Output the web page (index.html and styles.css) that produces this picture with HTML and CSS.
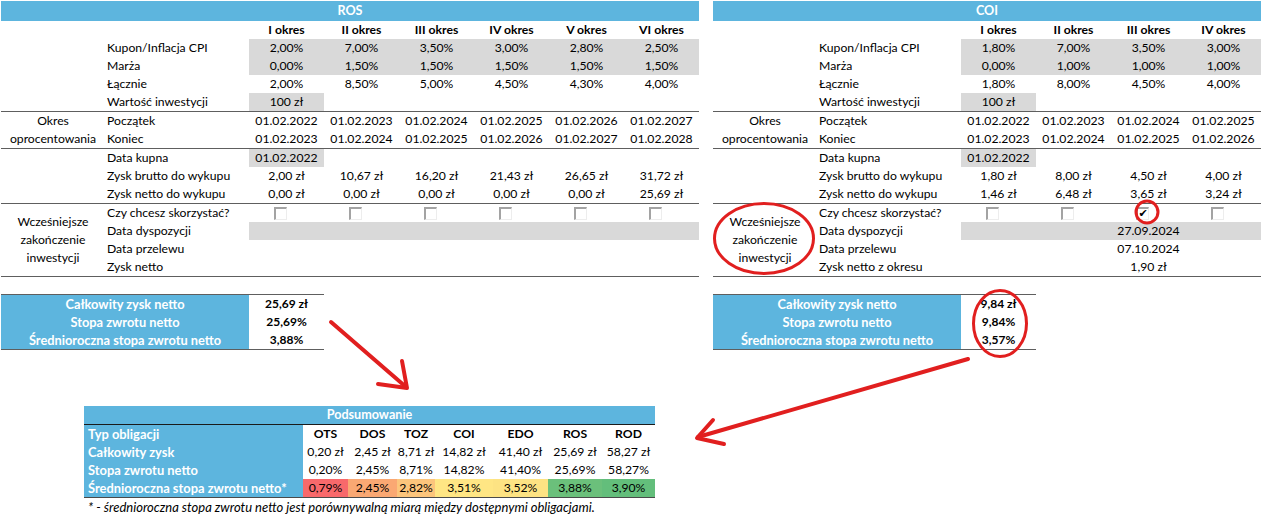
FILE: index.html
```html
<!DOCTYPE html>
<html lang="pl">
<head>
<meta charset="utf-8">
<title>Obligacje</title>
<link rel="stylesheet" href="styles.css">
</head>
<body>
<div class="sheet">
  <div class="top">
    <section class="panel ros">
      <div class="bar">ROS</div>
      <div class="grp">
        <div class="side s5"></div>
        <div class="lbl"></div>
        <div class="c b">I okres</div><div class="c b">II okres</div><div class="c b">III okres</div><div class="c b">IV okres</div><div class="c b">V okres</div><div class="c b">VI okres</div>
        <div class="lbl">Kupon/Inflacja CPI</div>
        <div class="c g">2,00%</div><div class="c g">7,00%</div><div class="c g">3,50%</div><div class="c g">3,00%</div><div class="c g">2,80%</div><div class="c g">2,50%</div>
        <div class="lbl">Marża</div>
        <div class="c g">0,00%</div><div class="c g">1,50%</div><div class="c g">1,50%</div><div class="c g">1,50%</div><div class="c g">1,50%</div><div class="c g">1,50%</div>
        <div class="lbl">Łącznie</div>
        <div class="c">2,00%</div><div class="c">8,50%</div><div class="c">5,00%</div><div class="c">4,50%</div><div class="c">4,30%</div><div class="c">4,00%</div>
        <div class="lbl">Wartość inwestycji</div>
        <div class="c g">100 zł</div>
      </div>
      <div class="grp">
        <div class="side s2">Okres<br>oprocentowania</div>
        <div class="lbl">Początek</div>
        <div class="c">01.02.2022</div><div class="c">01.02.2023</div><div class="c">01.02.2024</div><div class="c">01.02.2025</div><div class="c">01.02.2026</div><div class="c">01.02.2027</div>
        <div class="lbl">Koniec</div>
        <div class="c">01.02.2023</div><div class="c">01.02.2024</div><div class="c">01.02.2025</div><div class="c">01.02.2026</div><div class="c">01.02.2027</div><div class="c">01.02.2028</div>
      </div>
      <div class="grp">
        <div class="side s3"></div>
        <div class="lbl">Data kupna</div>
        <div class="c g">01.02.2022</div>
        <div class="lbl">Zysk brutto do wykupu</div>
        <div class="c">2,00 zł</div><div class="c">10,67 zł</div><div class="c">16,20 zł</div><div class="c">21,43 zł</div><div class="c">26,65 zł</div><div class="c">31,72 zł</div>
        <div class="lbl">Zysk netto do wykupu</div>
        <div class="c">0,00 zł</div><div class="c">0,00 zł</div><div class="c">0,00 zł</div><div class="c">0,00 zł</div><div class="c">0,00 zł</div><div class="c">25,69 zł</div>
      </div>
      <div class="grp">
        <div class="side s4">Wcześniejsze<br>zakończenie<br>inwestycji</div>
        <div class="lbl">Czy chcesz skorzystać?</div>
        <div class="cbx"><span class="box"></span></div><div class="cbx"><span class="box"></span></div><div class="cbx"><span class="box"></span></div><div class="cbx"><span class="box"></span></div><div class="cbx"><span class="box"></span></div><div class="cbx"><span class="box"></span></div>
        <div class="lbl">Data dyspozycji</div>
        <div class="g"></div><div class="g"></div><div class="g"></div><div class="g"></div><div class="g"></div><div class="g"></div>
        <div class="lbl">Data przelewu</div>
        <div class="lbl">Zysk netto</div>
      </div>
      <div class="summ">
        <div class="k">Całkowity zysk netto</div><div class="v">25,69 zł</div>
        <div class="k">Stopa zwrotu netto</div><div class="v">25,69%</div>
        <div class="k">Średnioroczna stopa zwrotu netto</div><div class="v">3,88%</div>
      </div>
    </section>

    <section class="panel coi">
      <div class="bar">COI</div>
      <div class="grp">
        <div class="side s5"></div>
        <div class="lbl"></div>
        <div class="c b">I okres</div><div class="c b">II okres</div><div class="c b">III okres</div><div class="c b">IV okres</div>
        <div class="lbl">Kupon/Inflacja CPI</div>
        <div class="c g">1,80%</div><div class="c g">7,00%</div><div class="c g">3,50%</div><div class="c g">3,00%</div>
        <div class="lbl">Marża</div>
        <div class="c g">0,00%</div><div class="c g">1,00%</div><div class="c g">1,00%</div><div class="c g">1,00%</div>
        <div class="lbl">Łącznie</div>
        <div class="c">1,80%</div><div class="c">8,00%</div><div class="c">4,50%</div><div class="c">4,00%</div>
        <div class="lbl">Wartość inwestycji</div>
        <div class="c g">100 zł</div>
      </div>
      <div class="grp">
        <div class="side s2">Okres<br>oprocentowania</div>
        <div class="lbl">Początek</div>
        <div class="c">01.02.2022</div><div class="c">01.02.2023</div><div class="c">01.02.2024</div><div class="c">01.02.2025</div>
        <div class="lbl">Koniec</div>
        <div class="c">01.02.2023</div><div class="c">01.02.2024</div><div class="c">01.02.2025</div><div class="c">01.02.2026</div>
      </div>
      <div class="grp">
        <div class="side s3"></div>
        <div class="lbl">Data kupna</div>
        <div class="c g">01.02.2022</div>
        <div class="lbl">Zysk brutto do wykupu</div>
        <div class="c">1,80 zł</div><div class="c">8,00 zł</div><div class="c">4,50 zł</div><div class="c">4,00 zł</div>
        <div class="lbl">Zysk netto do wykupu</div>
        <div class="c">1,46 zł</div><div class="c">6,48 zł</div><div class="c">3,65 zł</div><div class="c">3,24 zł</div>
      </div>
      <div class="grp">
        <div class="side s4">Wcześniejsze<br>zakończenie<br>inwestycji</div>
        <div class="lbl">Czy chcesz skorzystać?</div>
        <div class="cbx"><span class="box"></span></div><div class="cbx"><span class="box"></span></div><div class="cbx"><span class="box on">✔</span></div><div class="cbx"><span class="box"></span></div>
        <div class="lbl">Data dyspozycji</div>
        <div class="g"></div><div class="g"></div><div class="c g">27.09.2024</div><div class="g"></div>
        <div class="lbl">Data przelewu</div>
        <div></div><div></div><div class="c">07.10.2024</div>
        <div class="lbl">Zysk netto z okresu</div>
        <div></div><div></div><div class="c">1,90 zł</div>
      </div>
      <div class="summ">
        <div class="k">Całkowity zysk netto</div><div class="v">9,84 zł</div>
        <div class="k">Stopa zwrotu netto</div><div class="v">9,84%</div>
        <div class="k">Średnioroczna stopa zwrotu netto</div><div class="v">3,57%</div>
      </div>
    </section>
  </div>

  <div class="bottom">
    <div class="pod">
      <div class="phead">Podsumowanie</div>
      <div class="pk">Typ obligacji</div>
      <div class="c b">OTS</div><div class="c b">DOS</div><div class="c b">TOZ</div><div class="c b">COI</div><div class="c b">EDO</div><div class="c b">ROS</div><div class="c b">ROD</div>
      <div class="pk">Całkowity zysk</div>
      <div class="c">0,20 zł</div><div class="c">2,45 zł</div><div class="c">8,71 zł</div><div class="c">14,82 zł</div><div class="c">41,40 zł</div><div class="c">25,69 zł</div><div class="c">58,27 zł</div>
      <div class="pk">Stopa zwrotu netto</div>
      <div class="c">0,20%</div><div class="c">2,45%</div><div class="c">8,71%</div><div class="c">14,82%</div><div class="c">41,40%</div><div class="c">25,69%</div><div class="c">58,27%</div>
      <div class="pk">Średnioroczna stopa zwrotu netto*</div>
      <div class="c" style="background:#f8696b">0,79%</div>
      <div class="c" style="background:#faa873">2,45%</div>
      <div class="c" style="background:#fcc57c">2,82%</div>
      <div class="c" style="background:#ffe684">3,51%</div>
      <div class="c" style="background:#fde383">3,52%</div>
      <div class="c" style="background:#6bc07b">3,88%</div>
      <div class="c" style="background:#63be7b">3,90%</div>
    </div>
    <p class="note">* - średnioroczna stopa zwrotu netto jest porównywalną miarą między dostępnymi obligacjami.</p>
  </div>

  <svg class="overlay" width="1280" height="525" viewBox="0 0 1280 525">
    <g fill="none" stroke="#e11f1f" stroke-linecap="round" stroke-linejoin="round">
      <ellipse cx="764" cy="238.5" rx="49.5" ry="35" stroke-width="3"/>
      <circle cx="1147" cy="212" r="11" stroke-width="3"/>
      <ellipse cx="1000" cy="323.5" rx="26.5" ry="33" stroke-width="3"/>
      <path d="M331 322 L406 387" stroke-width="4"/>
      <path d="M402 361 L407 388 L378 384" stroke-width="4"/>
      <path d="M968 359 L698 437" stroke-width="4"/>
      <path d="M713 420 L697 438 L724 444" stroke-width="4"/>
    </g>
  </svg>
</div>
</body>
</html>
```

FILE: styles.css
```css
* { box-sizing: border-box; }

body {
  margin: 0;
  background: #fff;
  color: #000;
  font-family: Lato, "Liberation Sans", Arial, sans-serif;
  font-size: 12.2px;
}

.sheet {
  position: relative;
  width: 1280px;
  height: 525px;
  padding: 1px 0 0 1px;
  overflow: hidden;
}

.top {
  display: flex;
  align-items: flex-start;
  gap: 14px;
}

.panel {
  display: flex;
  flex-direction: column;
}

.ros { --cols: 104px 144px repeat(6, 75px); width: 698px; }
.coi { --cols: 104px 144px repeat(4, 75px); width: 548px; }

.bar {
  height: 20px;
  line-height: 20px;
  background: #5db5de;
  color: #fff;
  font-weight: bold;
  font-size: 12.6px;
  text-align: center;
}

.grp {
  display: grid;
  grid-template-columns: var(--cols);
  grid-auto-rows: 18px;
  line-height: 18px;
  border-bottom: 1px solid #5e5e5e;
}

.grp > div { white-space: nowrap; }

.side {
  grid-column: 1;
  display: flex;
  align-items: center;
  justify-content: center;
  text-align: center;
}
.s2 { grid-row: span 2; }
.s3 { grid-row: span 3; }
.s4 { grid-row: span 4; }
.s5 { grid-row: span 5; }

.lbl {
  grid-column: 2;
  padding-left: 2px;
}

.c { text-align: center; white-space: nowrap; }
.b { font-weight: bold; font-size: 12.2px; }
.g { background: #d9d9d9; }

.cbx {
  display: flex;
  align-items: center;
  justify-content: center;
  padding-right: 12px;
}

.box {
  display: flex;
  align-items: center;
  justify-content: center;
  width: 13px;
  height: 13px;
  border-top: 2px solid #a3a3a3;
  border-left: 2px solid #a3a3a3;
  border-right: 1px solid #ededed;
  border-bottom: 1px solid #ededed;
  background: #fff;
  font-size: 11px;
  font-weight: bold;
  line-height: 1;
  font-family: "DejaVu Sans", sans-serif;
}
.box.on { color: #000; }

.summ {
  display: grid;
  grid-template-columns: 248px 75px;
  grid-auto-rows: 18px;
  line-height: 18px;
  width: 323px;
  margin-top: 17px;
  border-top: 1px solid #5e5e5e;
  border-bottom: 1px solid #5e5e5e;
  font-weight: bold;
}
.summ .k {
  background: #5db5de;
  color: #fff;
  text-align: center;
  font-size: 12.8px;
}
.summ .v { text-align: center; font-size: 12px; }

.bottom {
  margin: 56px 0 0 83px;
}

.pod {
  display: grid;
  grid-template-columns: 219px 45px 49px 38px 58px 55px 54px 53px;
  grid-template-rows: 19px;
  grid-auto-rows: 18px;
  line-height: 18px;
  width: 571px;
  border-bottom: 1px solid #4a4a4a;
}

.phead {
  grid-column: 1 / -1;
  background: #5db5de;
  color: #fff;
  font-weight: bold;
  font-size: 12.6px;
  text-align: center;
  border-bottom: 1px solid #1a1a1a;
}

.pk {
  grid-column: 1;
  background: #5db5de;
  color: #fff;
  font-weight: bold;
  font-size: 12.9px;
  padding-left: 4px;
  white-space: nowrap;
}

.note {
  margin: 0;
  padding-left: 4px;
  font-style: italic;
  font-size: 13px;
  line-height: 18px;
}

.overlay {
  position: absolute;
  top: 0;
  left: 0;
  pointer-events: none;
}
```
